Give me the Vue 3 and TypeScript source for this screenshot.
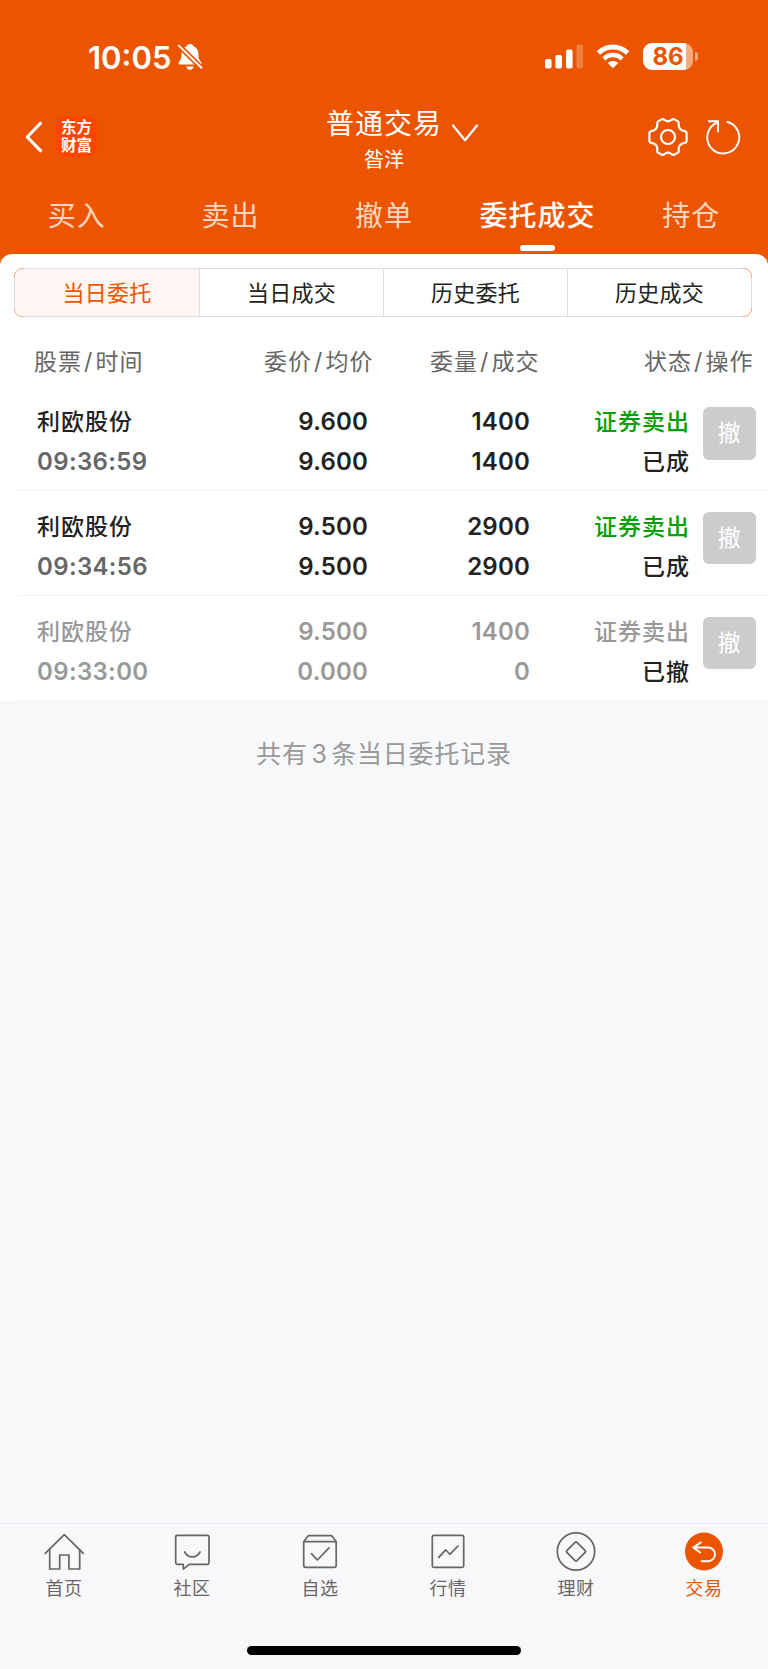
<script setup lang="ts">
import { ref } from 'vue'

interface Order {
  name: string
  time: string
  price: string
  avg: string
  qty: string
  filled: string
  side: string
  status: string
  revoked: boolean
}

const tabs: string[] = ['买入', '卖出', '撤单', '委托成交', '持仓']
const activeTab = ref(3)

const segments: string[] = ['当日委托', '当日成交', '历史委托', '历史成交']
const activeSegment = ref(0)

const columns: [string, string][] = [
  ['股票', '时间'],
  ['委价', '均价'],
  ['委量', '成交'],
  ['状态', '操作'],
]

const orders: Order[] = [
  { name: '利欧股份', time: '09:36:59', price: '9.600', avg: '9.600', qty: '1400', filled: '1400', side: '证券卖出', status: '已成', revoked: false },
  { name: '利欧股份', time: '09:34:56', price: '9.500', avg: '9.500', qty: '2900', filled: '2900', side: '证券卖出', status: '已成', revoked: false },
  { name: '利欧股份', time: '09:33:00', price: '9.500', avg: '0.000', qty: '1400', filled: '0', side: '证券卖出', status: '已撤', revoked: true },
]

const navItems: { key: string; label: string }[] = [
  { key: 'home', label: '首页' },
  { key: 'community', label: '社区' },
  { key: 'watch', label: '自选' },
  { key: 'market', label: '行情' },
  { key: 'wealth', label: '理财' },
  { key: 'trade', label: '交易' },
]
const activeNav = ref('trade')
</script>

<template>
  <div class="screen">
    <header class="top">
      <div class="status-bar">
        <span class="clock">10:05</span>
        <svg class="bell" width="26" height="28" viewBox="0 0 26 28">
          <path d="M13 1c1.8 0 3 .9 3.400 2.200 3.400 1.200 4.900 4 5 7.500.1 4.600.8 6.300 2.700 8.300.9 1 .7 2.600-.9 2.600H2.800c-1.600 0-1.800-1.600-.9-2.600 1.900-2 2.600-3.700 2.700-8.300.1-3.500 1.600-6.300 5-7.500C10 1.900 11.200 1 13 1z" fill="#fff" />
          <path d="M9.200 23.600h7.600c-.4 1.900-1.900 3.200-3.800 3.200s-3.400-1.300-3.800-3.200z" fill="#fff" />
          <path d="M1.400 2.200 25 25.400" stroke="#eb5502" stroke-width="5.200" />
          <path d="M1.800 2.600 24.400 24.800" stroke="#fff" stroke-width="2" stroke-linecap="round" />
        </svg>
        <svg class="signal" width="39" height="26" viewBox="0 0 39 26">
          <rect x="0" y="15" width="6.600" height="9.500" rx="2" fill="#fff" />
          <rect x="10.400" y="11" width="6.600" height="13.500" rx="2" fill="#fff" />
          <rect x="21" y="5.600" width="6.600" height="18.900" rx="2" fill="#fff" />
          <rect x="31.400" y="0.400" width="6.600" height="24.100" rx="2" fill="#fff" fill-opacity=".25" />
        </svg>
        <svg class="wifi" width="34" height="25" viewBox="0 0 34 25">
          <path d="M2.400 9.100C10.500 1 23.500 1 31.600 9.100" fill="none" stroke="#fff" stroke-width="5" />
          <path d="M7.900 14.800c5-5 13.200-5 18.200 0" fill="none" stroke="#fff" stroke-width="4.500" />
          <path d="M17 24.300l-5.300-5.200c2.900-2.900 7.700-2.900 10.600 0z" fill="#fff" />
        </svg>
        <div class="battery"><span>86</span></div>
        <i class="battery-cap"></i>
      </div>

      <div class="title-bar">
        <div class="side">
          <svg class="back" width="20" height="34" viewBox="0 0 20 34">
            <path d="M16.300 3.500 3.300 17l13 13.500" fill="none" stroke="#fff" stroke-width="3.200" stroke-linecap="square" stroke-linejoin="round" />
          </svg>
          <div class="logo"><span>东方</span><span>财富</span></div>
        </div>
        <div class="account">
          <div class="titles">
            <h1>普通交易</h1>
            <p>昝洋</p>
          </div>
          <svg class="caret" width="28" height="20" viewBox="0 0 28 20">
            <path d="M2 2.500 14 17.200 26 2.500" fill="none" stroke="#fff" stroke-width="2.200" stroke-linecap="round" stroke-linejoin="round" />
          </svg>
        </div>
        <div class="actions">
          <svg width="42" height="42" viewBox="-21 -21 42 42" fill="none" stroke="#fff" stroke-width="2.200" stroke-linejoin="round">
            <circle r="7" />
            <path d="M0-15.600C2.500-15.600 4-18.300 6-17.900L9.600-15.900Q11.200-15 10.700-12.800C10.200-9 13-6.300 16.800-5.900Q18.600-5.500 18.600-3.500V3.500Q18.600 5.500 16.800 5.900C13 6.300 10.200 9 10.700 12.800Q11.200 15 9.600 15.900L6 17.900C4 18.300 2.500 15.600 0 15.600C-2.500 15.600-4 18.300-6 17.900L-9.600 15.900Q-11.200 15-10.700 12.800C-10.200 9-13 6.300-16.800 5.900Q-18.600 5.500-18.600 3.500V-3.500Q-18.600-5.500-16.800-5.900C-13-6.300-10.200-9-10.700-12.800Q-11.200-15-9.600-15.900L-6-17.900C-4-18.300-2.500-15.600 0-15.600Z" />
          </svg>
          <svg width="38" height="42" viewBox="-19 -21 38 42" fill="none" stroke="#fff" stroke-width="1.900">
            <path d="M3.600-15.200A16 16 0 1 1-5.200-14.600" />
            <path d="M-15-15.700H-5V-4.700" />
          </svg>
        </div>
      </div>

      <nav class="tabs">
        <button v-for="(tab, i) in tabs" :key="tab" :class="{ active: i === activeTab }" @click="activeTab = i">{{ tab }}</button>
      </nav>
    </header>

    <main class="panel">
      <div class="segments">
        <button v-for="(seg, i) in segments" :key="seg" :class="{ active: i === activeSegment }" @click="activeSegment = i">{{ seg }}</button>
      </div>

      <div class="head">
        <span v-for="col in columns" :key="col[0]">{{ col[0] }}<i>/</i>{{ col[1] }}</span>
      </div>

      <div v-for="order in orders" :key="order.time" class="order" :class="{ revoked: order.revoked }">
        <div class="cell name"><span class="cn">{{ order.name }}</span><span class="time">{{ order.time }}</span></div>
        <div class="cell"><span>{{ order.price }}</span><span>{{ order.avg }}</span></div>
        <div class="cell"><span>{{ order.qty }}</span><span>{{ order.filled }}</span></div>
        <div class="cell status"><span class="cn sell">{{ order.side }}</span><span class="cn state">{{ order.status }}</span></div>
        <button class="cancel">撤</button>
      </div>
    </main>

    <p class="summary">共有<span>{{ orders.length }}</span>条当日委托记录</p>

    <footer class="bottom">
      <nav class="bottom-nav">
        <a v-for="item in navItems" :key="item.key" :class="{ active: item.key === activeNav }" @click="activeNav = item.key">
          <svg width="40" height="40" viewBox="0 0 40 40" fill="none" stroke="currentColor" stroke-width="1.700" stroke-linejoin="round" stroke-linecap="round">
            <template v-if="item.key === 'home'">
              <path d="M1.200 22.300 20.300 3.600l19 18.700" />
              <path d="M5.700 18.500V38h10V24h9.200v14h10.800V18.500" />
            </template>
            <template v-else-if="item.key === 'community'">
              <path d="M5.200 4.300h30.300q1.500 0 1.500 1.500v26q0 1.500-1.500 1.500H17.300l-6 4.900v-4.900H5.200q-1.500 0-1.500-1.500v-26q0-1.500 1.500-1.500z" />
              <path d="M12.700 21c3.600 6.600 11.700 6.600 15.300 0" />
            </template>
            <template v-else-if="item.key === 'watch'">
              <path d="M3.700 10.700 7.600 5.500q.6-.8 1.600-.8h21.600q1 0 1.600.8l3.800 5.200v23.600q0 2-2 2H5.700q-2 0-2-2zM3.700 10.700h32.500" />
              <path d="M11.400 22.700l6 6.300L29 16.800" />
            </template>
            <template v-else-if="item.key === 'market'">
              <rect x="4.300" y="4.300" width="31.400" height="32" rx="1.500" />
              <path d="M10.700 26.300l7-7.500 4.100 4.500L30 15" />
            </template>
            <template v-else-if="item.key === 'wealth'">
              <circle cx="20" cy="20.500" r="18.700" />
              <path d="M19.100 11.300q.9-.9 1.800 0l8.300 8.300q.9.9 0 1.800l-8.300 8.300q-.9.900-1.800 0l-8.300-8.300q-.9-.9 0-1.800z" />
            </template>
            <template v-else>
              <circle cx="20" cy="20.500" r="19" fill="currentColor" stroke="none" />
              <path d="M16.800 11.400 9.300 16.500l6.800 5.100M9.300 16.500h14.900a6.850 6.850 0 0 1 0 13.700h-6.600" stroke="#fff" stroke-width="1.900" />
            </template>
          </svg>
          <span>{{ item.label }}</span>
        </a>
      </nav>
      <div class="home-indicator"></div>
    </footer>
  </div>
</template>

<style>
body {
  margin: 0;
  background: #f7f8fa;
}
</style>

<style scoped>
.screen {
  width: 768px;
  height: 1669px;
  display: flex;
  flex-direction: column;
  overflow: hidden;
  background: #f7f8fa;
  font-family: Inter, "Noto Sans CJK SC", sans-serif;
  color: #222;
}
button {
  border: 0;
  padding: 0;
  margin: 0;
  background: none;
  font: inherit;
  color: inherit;
  letter-spacing: inherit;
}
h1,
p {
  margin: 0;
  font-weight: 400;
}
i {
  font-style: normal;
}
svg {
  display: block;
  flex: none;
}
.top {
  height: 266px;
  flex: none;
  background: #eb5502;
  color: #fff;
}
.status-bar {
  height: 100px;
  box-sizing: border-box;
  padding: 43px 0 0 88px;
  display: flex;
  align-items: flex-start;
}
.clock {
  width: 89px;
  font-size: 31px;
  font-weight: 600;
  line-height: 29px;
  white-space: nowrap;
}
.signal {
  margin: 1px 0 0 342px;
}
.wifi {
  margin: 1px 0 0 12px;
}
.battery {
  width: 50px;
  height: 27px;
  margin-left: 13px;
  border-radius: 9px;
  background: linear-gradient(90deg, #fff 42.500px, #f5aa80 42.500px);
  color: #eb5502;
  font-size: 24px;
  font-weight: 700;
  line-height: 27px;
  text-align: center;
}
.battery-cap {
  width: 3px;
  height: 9px;
  margin: 9px 0 0 2px;
  border-radius: 0 4px 4px 0;
  background: #f5aa80;
}
.title-bar {
  height: 80px;
  display: grid;
  grid-template-columns: 1fr auto 1fr;
}
.side {
  display: flex;
  padding: 16px 0 0 24px;
}
.back {
  margin-top: 4px;
}
.logo {
  width: 41px;
  height: 41px;
  margin-left: 12px;
  border-radius: 9px;
  background: #ff4400;
  display: flex;
  flex-direction: column;
  align-items: center;
  justify-content: center;
  font-size: 15.500px;
  font-weight: 700;
  line-height: 17.500px;
}
.account {
  display: flex;
  position: relative;
}
.titles {
  text-align: center;
  padding-top: 5.500px;
}
h1 {
  font-size: 28px;
  line-height: 36px;
  letter-spacing: 1px;
}
.titles p {
  font-size: 20px;
  line-height: 36px;
}
.caret {
  position: absolute;
  left: 125px;
  top: 23px;
}
.actions {
  display: flex;
  justify-content: flex-end;
  gap: 15px;
  padding: 16px 26px 0 0;
}
.tabs {
  display: grid;
  grid-template-columns: repeat(5, 1fr);
  height: 71px;
}
.tabs button {
  display: flex;
  flex-direction: column;
  align-items: center;
  padding-top: 16px;
  font-size: 28px;
  line-height: 40px;
  letter-spacing: 1px;
  color: #fbd5bf;
  font-weight: 400;
}
.tabs .active {
  color: #fff;
  font-weight: 500;
}
.tabs .active::after {
  content: "";
  width: 35px;
  height: 6px;
  margin-top: 9px;
  border-radius: 3px;
  background: #fff;
}
.panel {
  flex: none;
  height: 447px;
  margin-top: -12px;
  box-sizing: border-box;
  padding-top: 14px;
  border-radius: 12px 12px 0 0;
  background: #fff;
}
.segments {
  position: relative;
  width: 738px;
  height: 49px;
  box-sizing: border-box;
  margin-left: 14px;
  border: 1px solid #f0a07a;
  border-radius: 8px;
  display: grid;
  grid-template-columns: repeat(4, 1fr);
  font-size: 22px;
  letter-spacing: 0.200px;
}
.segments::before,
.segments::after {
  content: "";
  position: absolute;
  pointer-events: none;
  border: 0 solid #dcdee5;
}
.segments::before {
  inset: -1px 8px;
  border-width: 1px 0;
}
.segments::after {
  inset: 8px -1px;
  border-width: 0 1px;
}
.segments button {
  padding-bottom: 4px;
}
.segments button + button {
  border-left: 1.500px solid #dcdee5;
}
.segments .active {
  background: #fff5f2;
  color: #eb5502;
  border-radius: 7px 0 0 7px;
}
.head {
  display: grid;
  grid-template-columns: 230px 166px 214px 1fr;
  height: 69.500px;
  padding-left: 34px;
  font-size: 23px;
  line-height: 91px;
  letter-spacing: 1px;
  color: #666;
}
.head i {
  display: inline-block;
  width: 13.500px;
  text-align: center;
}
.order {
  height: 104.800px;
  box-sizing: border-box;
  margin-left: 17px;
  padding: 15.500px 12.500px 0 20px;
  border-bottom: 1px solid #f2f3f5;
  display: grid;
  grid-template-columns: 130px 201px 162px 160px 1fr;
  font-size: 24px;
  font-weight: 600;
  line-height: 40px;
}
.cell {
  display: flex;
  flex-direction: column;
  text-align: right;
  letter-spacing: 0.200px;
}
.cell.name {
  text-align: left;
}
.cn {
  font-size: 23px;
  font-weight: 500;
  letter-spacing: 1px;
}
.time {
  color: #666;
  letter-spacing: 0.350px;
}
.sell {
  color: #00a000;
}
.revoked,
.revoked .time,
.revoked .sell {
  color: #999;
}
.revoked .state {
  color: #222;
}
.cancel {
  justify-self: end;
  width: 52.500px;
  height: 52.500px;
  margin-top: 5px;
  border-radius: 6px;
  background: #ccc;
  color: #fff;
  font-size: 23px;
  font-weight: 400;
}
.summary {
  text-align: center;
  font-size: 25px;
  line-height: 40px;
  letter-spacing: 0.800px;
  margin-top: 32.500px;
  color: #999;
}
.summary span {
  margin: 0 3.500px;
}
.bottom {
  height: 146px;
  flex: none;
  margin-top: auto;
  box-sizing: border-box;
  border-top: 1.500px solid #e8eaef;
  background: #f8f8fb;
}
.bottom-nav {
  display: grid;
  grid-template-columns: repeat(6, 1fr);
  height: 122px;
}
.bottom-nav a {
  display: flex;
  flex-direction: column;
  align-items: center;
  padding-top: 7px;
  color: #666;
  font-size: 18px;
  line-height: 35px;
  letter-spacing: 0.600px;
}
.bottom-nav .active {
  color: #eb5502;
}
.home-indicator {
  width: 274px;
  height: 9px;
  margin: 0 auto;
  border-radius: 5px;
  background: #000;
}
</style>
